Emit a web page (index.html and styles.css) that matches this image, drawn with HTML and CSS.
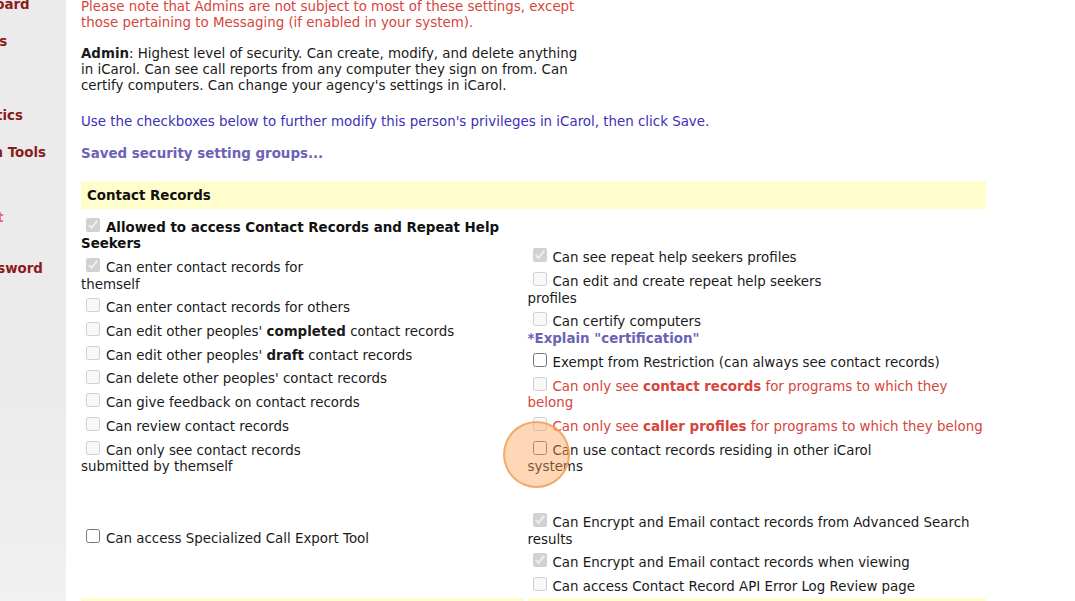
FILE: index.html
```html
<!DOCTYPE html>
<html lang="en">
	<head>
		<meta http-equiv="Content-Type" content="text/html; charset=UTF-8">
		<title>iCarol - User security settings</title>
		<link rel="stylesheet" href="styles.css">
	</head>
	<body>
		<div class="page">
			<nav class="sidebar">
				<ul class="sideNav">
					<li>Dashboard</li>
					<li>Reports</li>
					<li>Calls</li>
					<li class="sideStats">Statistics</li>
					<li class="sideGap">Admin Tools</li>
					<li class="sideAlert">Log Out</li>
					<li class="sidePass">My Password</li>
				</ul>
			</nav>

			<main class="main">
				<p class="note">Please note that Admins are not subject to most of these settings, except<br>those pertaining to Messaging (if enabled in your system).</p>
				<p class="admin"><b>Admin</b>: Highest level of security. Can create, modify, and delete anything<br>in iCarol. Can see call reports from any computer they sign on from. Can<br>certify computers. Can change your agency's settings in iCarol.</p>
				<p class="intro">Use the checkboxes below to further modify this person's privileges in iCarol, then click Save.</p>
				<p class="saved">Saved security setting groups...</p>

				<h3 class="sectionHeader">Contact Records</h3>
				<div class="permGrid">
					<div class="permList">
						<label class="perm strong"><input type="checkbox" checked disabled>Allowed to access Contact Records and Repeat Help<br>Seekers</label>
						<label class="perm"><input type="checkbox" checked disabled>Can enter contact records for<br>themself</label>
						<label class="perm"><input type="checkbox" disabled>Can enter contact records for others</label>
						<label class="perm"><input type="checkbox" disabled>Can edit other peoples' <b>completed</b> contact records</label>
						<label class="perm"><input type="checkbox" disabled>Can edit other peoples' <b>draft</b> contact records</label>
						<label class="perm"><input type="checkbox" disabled>Can delete other peoples' contact records</label>
						<label class="perm"><input type="checkbox" disabled>Can give feedback on contact records</label>
						<label class="perm"><input type="checkbox" disabled>Can review contact records</label>
						<label class="perm"><input type="checkbox" disabled>Can only see contact records<br>submitted by themself</label>
					</div>
					<div class="permList">
						<label class="perm"><input type="checkbox" checked disabled>Can see repeat help seekers profiles</label>
						<label class="perm"><input type="checkbox" disabled>Can edit and create repeat help seekers<br>profiles</label>
						<label class="perm"><input type="checkbox" disabled>Can certify computers</label>
						<a class="explain" href="#">*Explain "certification"</a>
						<label class="perm"><input type="checkbox">Exempt from Restriction (can always see contact records)</label>
						<label class="perm warn"><input type="checkbox" disabled>Can only see <b>contact records</b> for programs to which they<br>belong</label>
						<label class="perm warn"><input type="checkbox" disabled>Can only see <b>caller profiles</b> for programs to which they belong</label>
						<label class="perm"><input type="checkbox">Can use contact records residing in other iCarol<br>systems</label>
					</div>
					<div class="permList solo">
						<label class="perm"><input type="checkbox">Can access Specialized Call Export Tool</label>
					</div>
					<div class="permList">
						<label class="perm"><input type="checkbox" checked disabled>Can Encrypt and Email contact records from Advanced Search<br>results</label>
						<label class="perm"><input type="checkbox" checked disabled>Can Encrypt and Email contact records when viewing</label>
						<label class="perm"><input type="checkbox" disabled>Can access Contact Record API Error Log Review page</label>
					</div>
				</div>
				<div class="sectionFoot">
					<div></div>
					<div></div>
				</div>
			</main>

			<span class="clickRing"></span>
		</div>
	</body>
</html>
```

FILE: styles.css
```css
html, body {
	margin: 0;
	padding: 0;
	background: #fff;
}
body {
	font-family: 'DejaVu Sans', Verdana, sans-serif;
	font-size: 13.4px;
	line-height: 16.5px;
	color: #1a1a1a;
}
.page {
	position: relative;
	display: flex;
	height: 601px;
	overflow: hidden;
}

/* left menu, scrolled partly out of view */
.sidebar {
	flex: 0 0 66px;
	background: linear-gradient(to bottom, #ebebeb 65%, #eeeeee 85%, #f1f1f1);
	overflow: hidden;
}
.sideNav {
	list-style: none;
	margin: -3px 0 0 -52px;
	padding: 0;
	white-space: nowrap;
}
.sideNav li {
	font-weight: bold;
	color: #8b1c1c;
	margin-bottom: 20.5px;
}
.sideNav .sideStats {
	text-indent: 4px;
}
.sideNav .sideGap {
	text-indent: 7px;
	margin-bottom: 48.5px;
}
.sideNav .sideAlert {
	color: #e2607a;
	text-indent: -4px;
	margin-bottom: 34.5px;
}
.sideNav .sidePass {
	text-indent: -4px;
}

.main {
	flex: 0 0 905px;
	padding: 0 15px;
}
.main p {
	margin: 0;
}
.note {
	color: #d6453d;
	line-height: 16px;
	margin-top: -1px !important;
}
.admin {
	line-height: 16px;
	margin-top: 15px !important;
}
.intro {
	color: #3b30b6;
	margin-top: 20px !important;
}
.saved {
	color: #6b63b5;
	font-weight: bold;
	margin-top: 15px !important;
}
.sectionHeader {
	margin: 19px 0 0;
	padding: 7px 6px 4px;
	background: #fffdcb;
	font-size: 13.4px;
	line-height: 16.5px;
	color: #111;
}

.permGrid {
	display: grid;
	grid-template-columns: 446.5px 1fr;
	row-gap: 32px;
	padding-top: 4px;
	align-items: end;
}
.permList.solo {
	align-self: start;
	margin-top: 16px;
}
.perm {
	display: block;
	white-space: nowrap;
}
.perm input {
	width: 14px;
	height: 14px;
	margin: 5.25px 6px 1px 5px;
	vertical-align: baseline;
}
.perm.strong {
	font-weight: bold;
	color: #111;
}
.perm.warn {
	color: #d6453d;
}
.explain {
	display: block;
	color: #6b63b5;
	font-weight: bold;
	text-decoration: none;
	margin-top: 0.5px;
}

.sectionFoot {
	display: grid;
	grid-template-columns: 443px 1fr;
	column-gap: 4px;
	margin-top: 2px;
}
.sectionFoot div {
	height: 24px;
	background: #fffdcb;
}

/* click marker from the recording */
.clickRing {
	position: absolute;
	left: 503px;
	top: 421px;
	width: 63px;
	height: 63px;
	border-radius: 50%;
	background: rgba(250, 160, 80, 0.42);
	border: 2px solid rgba(244, 160, 90, 0.85);
}
```
